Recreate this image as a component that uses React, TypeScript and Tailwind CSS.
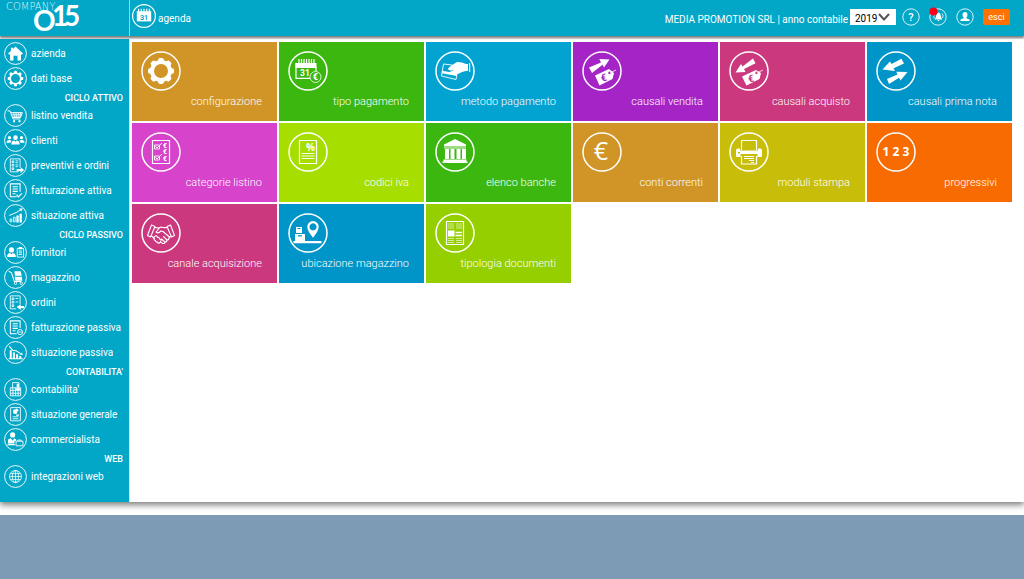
import type { ReactNode } from "react";

const gearTeeth = [0, 45, 90, 135, 180, 225, 270, 315];

const glyphs: Record<string, ReactNode> = {
    gear: (
        <>
            <circle cx="20" cy="20" r="9" fill="none" stroke="currentColor" strokeWidth="4" />
            {gearTeeth.map((a) => (
                <rect key={a} x="17.2" y="7" width="5.6" height="5" rx="1.8" fill="currentColor" transform={`rotate(${a} 20 20)`} />
            ))}
        </>
    ),
    gearThin: (
        <>
            <circle cx="20" cy="20" r="9.3" fill="none" stroke="currentColor" strokeWidth="3" />
            {gearTeeth.map((a) => (
                <rect key={a} x="17.4" y="6.5" width="5.2" height="4.5" rx="1.5" fill="currentColor" transform={`rotate(${a} 20 20)`} />
            ))}
        </>
    ),
    home: <path fill="currentColor" d="M20 8 L33 20 L31 22 L29.500 21 V32 H23.500 V24 H16.500 V32 H10.500 V21 L9 22 L7 20 L12 15.500 V10 H15.500 V12.200 Z" />,
    calendar: (
        <>
            <path fill="currentColor" d="M8 12 h24 v17 h-24z" />
            <path stroke="currentColor" strokeWidth="2" d="M11 8v5M15.500 8v5M20 8v5M24.500 8v5M29 8v5" />
            <text x="20" y="27" textAnchor="middle" fontSize="12" fontWeight="700" fill="#02a7c8">31</text>
        </>
    ),
    calendarEuro: (
        <>
            <path fill="currentColor" d="M7.500 12 h21 v5 h-21z" />
            <path fill="none" stroke="currentColor" strokeWidth="1.200" d="M8 12V27.400H22M28 16V20" />
            <path stroke="currentColor" strokeWidth="1.200" d="M11 8v4M13.500 8v4M16 8v4M18.500 8v4M21 8v4M23.500 8v4M26 8v4" />
            <text x="17" y="24.500" textAnchor="middle" fontSize="8.500" fontWeight="700" fill="currentColor">31</text>
            <circle cx="27.500" cy="26" r="5.500" fill="none" stroke="currentColor" strokeWidth="0.800" />
            <text x="27.300" y="29.200" textAnchor="middle" fontSize="9" fontWeight="900" fill="currentColor">€</text>
        </>
    ),
    cart: (
        <>
            <path fill="none" stroke="currentColor" strokeWidth="1.700" d="M6 12h4.500l5 14h13M12 15h20l-3.500 8.500H15" />
            <path fill="none" stroke="currentColor" strokeWidth="1.300" d="M13 18h18M14 21h16M17 15l1.500 9M21 15l.5 9M25 15l-.5 9M29 15l-1.500 9" />
            <circle cx="17.500" cy="30" r="2" fill="currentColor" />
            <circle cx="27" cy="30" r="2" fill="currentColor" />
        </>
    ),
    people: (
        <g fill="currentColor">
            <circle cx="20" cy="15" r="4" />
            <path d="M13 27v-3q0-3 5-4l2 2 2-2q5 1 5 4v3z" />
            <circle cx="9.500" cy="15" r="2.800" />
            <path d="M4.500 24v-2q0-2.500 5-3 3 .3 3.500 1.500-1.500 1-1.500 3.500z" />
            <circle cx="30.500" cy="15" r="2.800" />
            <path d="M35.500 24v-2q0-2.500-5-3-3 .3-3.500 1.500 1.500 1 1.500 3.500z" />
        </g>
    ),
    orderOut: (
        <>
            <path fill="none" stroke="currentColor" strokeWidth="1.500" d="M28 24V8.500H11V31h14M14 12h3v3h-3zM14 18h3v3h-3zM14 24h3v3h-3zM20 12h5M20 15h4M20 19h5M20 22h4" />
            <path fill="currentColor" d="M22 26h7v-3l6 5-6 5v-3h-7z" />
        </>
    ),
    orderIn: (
        <>
            <path fill="none" stroke="currentColor" strokeWidth="1.500" d="M28 23V8.500H11V31h10M14 12h3v3h-3zM14 18h3v3h-3zM14 24h3v3h-3zM20 13h5M20 19h5" />
            <path fill="currentColor" d="M35 26h-6v-3l-7 5 7 5v-3h6z" />
        </>
    ),
    invoiceCheck: (
        <>
            <path fill="none" stroke="currentColor" strokeWidth="1.800" d="M28 22V8.500H11V31h11M15 13.500h9M15 17.500h9M15 21.500h9M15 25.500h5" />
            <path fill="none" stroke="currentColor" strokeWidth="2.200" d="M22 27l3 4 6-6" />
        </>
    ),
    invoiceMinus: (
        <>
            <path fill="none" stroke="currentColor" strokeWidth="1.800" d="M28 21V8.500H11V31h11M15 13.500h9M15 17.500h9M15 21.500h9M15 25.500h5" />
            <circle cx="28" cy="28" r="4.500" fill="none" stroke="currentColor" strokeWidth="1.500" />
            <path stroke="currentColor" strokeWidth="1.500" d="M25 28h6" />
        </>
    ),
    chartUp: (
        <>
            <path fill="none" stroke="currentColor" strokeWidth="1.500" d="M10.500 31v-5h3v5zM16.500 31v-8h3v8z" />
            <path fill="currentColor" d="M21.500 20h4v12h-4zM27 17h4v15h-4zM26 8h7l-3 5z" />
            <path fill="none" stroke="currentColor" strokeWidth="1.700" d="M9 20l7-3 5-2 8-5" />
        </>
    ),
    chartDown: (
        <>
            <path fill="currentColor" d="M10 16h3.500v15h-3.500zM15.500 20h3.500v11h-3.500zM21 23h3.500v8h-3.500zM26.500 26h3.500v5h-3.500zM33 24h-6l4-4z" />
            <path fill="none" stroke="currentColor" strokeWidth="1.800" d="M9 9l6 7 6 1 8 5M8 31h25" />
        </>
    ),
    supplier: (
        <>
            <circle cx="13" cy="15.500" r="4.500" fill="currentColor" />
            <path fill="currentColor" d="M5.500 28v-3q1-4 5-4l2.500 2 2.500-2q4 .5 5 4v3z" />
            <path fill="none" stroke="currentColor" strokeWidth="1.500" d="M23 13h11v15H23zM25.500 17.500h6M25.500 20.500h6M25.500 23.500h6" />
            <path fill="currentColor" d="M25.500 10.500h6v4h-6z" />
        </>
    ),
    trolley: (
        <>
            <path fill="none" stroke="currentColor" strokeWidth="1.800" d="M8 9l5 3 5 15h12" />
            <path fill="currentColor" d="M18 9h11l2 8H19zM18.500 18.500h12.500l1 7H20z" />
            <circle cx="20" cy="30" r="2.200" fill="none" stroke="currentColor" strokeWidth="1.500" />
            <circle cx="30" cy="30" r="2.200" fill="none" stroke="currentColor" strokeWidth="1.500" />
        </>
    ),
    calculator: (
        <>
            <path fill="none" stroke="currentColor" strokeWidth="1.500" d="M11 17h18v14H11zM11 21.500h18M11 26.500h18M15.500 17v14M20 17v14M24.500 17v14M15 17v-9h11v9" />
            <path fill="currentColor" d="M22 10h4v6h-4zM21 18h7v3h-7z" />
        </>
    ),
    report: (
        <>
            <path fill="none" stroke="currentColor" strokeWidth="1.500" d="M11.500 8h17v23h-17zM15 24h10M15 27.500h10" />
            <circle cx="19.500" cy="15" r="4" fill="currentColor" />
            <path fill="currentColor" d="M21 9.500q4 .5 4.500 4.500H21zM21 20h5v2h-5z" />
        </>
    ),
    accountant: (
        <>
            <circle cx="15" cy="12" r="4.500" fill="currentColor" />
            <path fill="currentColor" d="M7 27v-7l5-2 3 4 3-4 3 2v3h-3v4zM6 28h13v2H6z" />
            <path fill="none" stroke="currentColor" strokeWidth="1.500" d="M21 23h12v8H21zM24 23v-2h6v2" />
        </>
    ),
    globe: (
        <g fill="none" stroke="currentColor" strokeWidth="1.300">
            <circle cx="20" cy="20" r="10.500" />
            <ellipse cx="20" cy="20" rx="5.500" ry="10.500" />
            <path d="M20 9.500v21M9.500 20h21M11 15h18M11 25h18" />
        </g>
    ),
    card: (
        <>
            <path fill="currentColor" d="M17 14l5-3 5 .5 4 1.500h2v7h-2l-4 1-4 2-4-.5-4 .2q-2-1 0-2l4-1.500-4 .3q-2-.5-2-2z" />
            <path fill="currentColor" d="M34 12h1.200v9H34z" />
            <path fill="none" stroke="currentColor" strokeWidth="0.900" d="M17 14l-8.500-1L6.500 25l14.500 3.500 1-5" />
            <path stroke="currentColor" strokeWidth="2.600" d="M7 21l15 2.800" />
        </>
    ),
    sale: (
        <>
            <path fill="currentColor" d="M7 16.500l12-5-1.700-3.500L27.500 8.500l-5.500 8-1.500-2.800L10 22z" />
            <path fill="currentColor" fillRule="evenodd" d="M13 24.500L27 18l5 4-1.500 6-13 6.500zM27.500 20.500a1.300 1.300 0 1 0 .1 0z" />
            <path fill="none" stroke="currentColor" strokeWidth="0.800" d="M28 22l6-3" />
            <text x="21.500" y="30" textAnchor="middle" fontSize="10" fontWeight="700" fill="#a524c5" transform="rotate(-14 22 26)">€</text>
        </>
    ),
    purchase: (
        <>
            <path fill="currentColor" d="M6.500 21.500l5.500-8.500 1.500 2.500L24 7.500l2.500 4.800-11.500 5.700 1.500 3z" />
            <path fill="currentColor" fillRule="evenodd" d="M13 25.500L27 19l5 3-1.500 6-13 6.500zM27.500 20.500a1.300 1.300 0 1 0 .1 0z" />
            <path fill="none" stroke="currentColor" strokeWidth="0.800" d="M28 22l6-3" />
            <text x="21.500" y="31" textAnchor="middle" fontSize="10" fontWeight="700" fill="#cb387e" transform="rotate(-14 22 26)">€</text>
        </>
    ),
    transfer: (
        <>
            <path fill="currentColor" d="M6.500 18.500l7.500-8 1.500 2.500L25.500 7.800l2.500 4.700-10.500 4.700 1.500 2.800z" />
            <path fill="currentColor" d="M11 28l10.500-4.500-1.200-2.700 11.200.2-7 8.500-1.500-2.800L13 33z" />
        </>
    ),
    checklist: (
        <>
            <path fill="none" stroke="currentColor" strokeWidth="1.200" d="M11.500 8.500h17v23h-17z" />
            <path fill="none" stroke="currentColor" strokeWidth="0.900" d="M13.500 13h5v4h-5zM13.500 24h5v4h-5zM14.500 14l1.500 2 5-5M14.500 25l1.500 2 5-5" />
            <g fontSize="6.500" fontWeight="900" fill="currentColor">
                <text x="22" y="15.500">€</text>
                <text x="22" y="22">€</text>
                <text x="22" y="29">€</text>
            </g>
        </>
    ),
    percent: (
        <>
            <path fill="none" stroke="currentColor" strokeWidth="1.200" d="M11.500 8.500h17v23h-17z" />
            <path stroke="currentColor" strokeWidth="0.900" d="M13.500 21.500h13M13.500 24h13M13.500 26.500h13" />
            <text x="22.500" y="19" textAnchor="middle" fontSize="10" fontWeight="700" fontFamily="Open Sans, sans-serif" fill="currentColor">%</text>
        </>
    ),
    bank: (
        <path fill="currentColor" d="M20 7l11 5.500v2H9v-2zM9 15.500h22v1H9zM10 17h4v10h-4zM15.500 17h4v10h-4zM21.500 17h4v10h-4zM27 17h4v10h-4zM8.500 27.500h23v2h-23zM7.500 29.500h25v1.500h-25z" />
    ),
    euro: <text x="19" y="28" textAnchor="middle" fontSize="25" fontWeight="500" fontFamily="Open Sans, sans-serif" fill="currentColor">€</text>,
    printer: (
        <>
            <path fill="none" stroke="currentColor" strokeWidth="1.200" d="M12.500 18V8.500h15V18M12.500 24v8h15v-8" />
            <path fill="currentColor" fillRule="evenodd" d="M9 16.500h2v2h18v-2h2q2 0 2 2V24q0 1-1 1h-3.500v-3h-17v3H8q-1 0-1-1v-5.500q0-2 2-2zM9 20v1.500h2V20z" />
            <path stroke="currentColor" strokeWidth="1" d="M15 24.500h10M15 26.500h10M20 28.500h5M22 30.500h3" />
        </>
    ),
    numbers: <text x="20" y="24" textAnchor="middle" fontSize="12" fontWeight="700" fontFamily="Open Sans, sans-serif" fill="currentColor">1 2 3</text>,
    handshake: (
        <g fill="none" stroke="currentColor" strokeWidth="1.100" strokeLinejoin="round" strokeLinecap="round">
            <path d="M10.500 12l3.500 1.500-4.500 10.500-3-1.500zM29.500 12L26 13.500l4.500 10.500 3-1.500z" />
            <path d="M14 14.500q3 1 6-.5 3 1 6 .5M18.500 15l-3.500 4q2 2 5-1l2 .5 7 6M10.500 23l3 2.500M29.500 23l-1.500 2" />
            <path d="M13 26q-1-2 1.500-3 2-.5 2 1.500 2-.5 2 1.500 2 0 1.500 2l-1.500 2q-1.500.500-2-1-2 .3-2-1.500-1.500 0-1.500-1.500zM20 29.500l2 1q2 .3 2-1.500 2 0 2-2 2 0 2-2M20.500 26l3.500 3M22.500 23.500l3.500 3.500" />
        </g>
    ),
    location: (
        <>
            <path fill="currentColor" fillRule="evenodd" d="M25 8a5.700 5.700 0 0 1 5.700 5.700q0 4-5.700 11-5.700-7-5.700-11A5.700 5.700 0 0 1 25 8zM25 10.300a3.600 3.600 0 1 0 .1 0z" />
            <path fill="currentColor" fillRule="evenodd" d="M8 14h6v6H8zM9.500 15v1h3v-1zM7 21h10v7H7zM10 22.200v1.400h4v-1.400zM5.500 28h28v2.200h-28z" />
        </>
    ),
    document: (
        <>
            <path fill="none" stroke="currentColor" strokeWidth="1.200" d="M11.500 8.500h17v23h-17z" />
            <path fill="currentColor" d="M13 17.500h6.500v6H13z" />
            <path stroke="currentColor" strokeWidth="1.300" d="M20.500 19.500h6.500M20.500 22.500h6.500" />
            <path stroke="currentColor" strokeWidth="0.600" d="M13 11h6M13 13h6M13 15h6M21 11h6M21 13h6M21 15h6M13 25.500h6M13 27.500h6M13 29.500h6M21 25.500h6M21 27.500h6M21 29.500h6" />
        </>
    ),
};

function RoundIcon({ name, className, ring }: { name: string; className: string; ring: number }) {
    return (
        <svg viewBox="0 0 40 40" className={`shrink-0 ${className}`} aria-hidden="true">
            <circle cx="20" cy="20" r="19" fill="none" stroke="currentColor" strokeWidth={ring} />
            {glyphs[name]}
        </svg>
    );
}

const menu = [
    {
        title: "",
        items: [
            { label: "azienda", icon: "home" },
            { label: "dati base", icon: "gearThin" },
        ],
    },
    {
        title: "CICLO ATTIVO",
        items: [
            { label: "listino vendita", icon: "cart" },
            { label: "clienti", icon: "people" },
            { label: "preventivi e ordini", icon: "orderOut" },
            { label: "fatturazione attiva", icon: "invoiceCheck" },
            { label: "situazione attiva", icon: "chartUp" },
        ],
    },
    {
        title: "CICLO PASSIVO",
        items: [
            { label: "fornitori", icon: "supplier" },
            { label: "magazzino", icon: "trolley" },
            { label: "ordini", icon: "orderIn" },
            { label: "fatturazione passiva", icon: "invoiceMinus" },
            { label: "situazione passiva", icon: "chartDown" },
        ],
    },
    {
        title: "CONTABILITA'",
        items: [
            { label: "contabilita'", icon: "calculator" },
            { label: "situazione generale", icon: "report" },
            { label: "commercialista", icon: "accountant" },
        ],
    },
    { title: "WEB", items: [{ label: "integrazioni web", icon: "globe" }] },
];

const tiles = [
    { label: "configurazione", icon: "gear", color: "bg-[#d09526]" },
    { label: "tipo pagamento", icon: "calendarEuro", color: "bg-[#3cb70f]" },
    { label: "metodo pagamento", icon: "card", color: "bg-[#02a3d1]" },
    { label: "causali vendita", icon: "sale", color: "bg-[#a524c5]" },
    { label: "causali acquisto", icon: "purchase", color: "bg-[#cb387e]" },
    { label: "causali prima nota", icon: "transfer", color: "bg-[#0095c8]" },
    { label: "categorie listino", icon: "checklist", color: "bg-[#d743cb]" },
    { label: "codici iva", icon: "percent", color: "bg-[#a6de00]" },
    { label: "elenco banche", icon: "bank", color: "bg-[#3cb70f]" },
    { label: "conti correnti", icon: "euro", color: "bg-[#d09526]" },
    { label: "moduli stampa", icon: "printer", color: "bg-[#c8bd08]" },
    { label: "progressivi", icon: "numbers", color: "bg-[#f86b00]" },
    { label: "canale acquisizione", icon: "handshake", color: "bg-[#cb387e]" },
    { label: "ubicazione magazzino", icon: "location", color: "bg-[#0095c8]" },
    { label: "tipologia documenti", icon: "document", color: "bg-[#96cf00]" },
];

function Logo() {
    return (
        <svg viewBox="0 0 129 36" className="w-[129px] h-9 overflow-visible" role="img" aria-label="Company 015">
            <text x="6" y="10" fontSize="10" fontWeight="200" fontFamily="DejaVu Sans, sans-serif" fill="#d5f3f8">COMPANY</text>
            <text x="33" y="31" fontSize="28" fontWeight="700" fontFamily="Lato, sans-serif" fill="#fff">
                O<tspan x="52" y="26">1</tspan><tspan x="64" y="26">5</tspan>
            </text>
        </svg>
    );
}

function Header() {
    return (
        <header className="relative z-10 flex h-9 bg-[#02a7c8] text-white shadow-[0_2px_2px_rgba(0,0,0,0.5)]">
            <a href="#" className="w-[130px] shrink-0 border-r border-[#8fdbe9]">
                <Logo />
            </a>
            <a href="#" className="flex items-center gap-0.5 pl-0.5 pb-1 text-[10px]">
                <RoundIcon name="calendar" className="size-6" ring={2} />
                <span className="pt-1">agenda</span>
            </a>
            <div className="ml-auto flex items-center pr-3.5 pb-0.5 text-[10px]">
                <label htmlFor="anno" className="pt-1">MEDIA PROMOTION SRL | anno contabile</label>
                <div className="relative ml-0.5">
                    <select id="anno" className="block h-4 w-[46px] appearance-none bg-white pt-0.5 pl-[5px] text-[10px] leading-4 text-black">
                        <option>2019</option>
                    </select>
                    <svg viewBox="0 0 12 8" className="pointer-events-none absolute right-1.5 top-1 h-2 w-3" aria-hidden="true">
                        <path d="M1 1l5 5.500 5-5.500" fill="none" stroke="#555" strokeWidth="2" />
                    </svg>
                </div>
                <div className="flex items-center gap-[9px] pl-[6px]">
                    <button type="button" aria-label="aiuto">
                        <svg viewBox="0 0 18 18" className="size-[18px]">
                            <circle cx="9" cy="9" r="8.200" fill="none" stroke="#d5f3f8" />
                            <text x="9" y="12.800" textAnchor="middle" fontSize="11" fontWeight="500" fill="#fff">?</text>
                        </svg>
                    </button>
                    <button type="button" aria-label="notifiche">
                        <svg viewBox="0 0 18 18" className="size-[18px] overflow-visible">
                            <circle cx="9" cy="9" r="8.200" fill="none" stroke="#d5f3f8" />
                            <path d="M9.500 4.500q2.200.500 2.500 4.500l1.300 2.500h-7.600L7 9q.3-4 2.500-4.500zM8.300 12h2.400L9.500 13.500z" fill="#fff" />
                            <path d="M13.200 5.500q1.500 2 .3 4.500" stroke="#fff" strokeWidth="0.800" fill="none" />
                            <path d="M5.500 6.500q-1.200 2-.2 4" stroke="#fff" strokeWidth="0.800" fill="none" />
                            <circle cx="4.500" cy="3.500" r="4" fill="#ff0015" />
                        </svg>
                    </button>
                    <button type="button" aria-label="profilo">
                        <svg viewBox="0 0 18 18" className="size-[18px]">
                            <circle cx="9" cy="9" r="8.200" fill="none" stroke="#d5f3f8" />
                            <path d="M9 4q2.500 0 2.500 3 0 1.500-1.200 2.500v.8l3.200 1.200V13h-9v-1.500l3.200-1.200v-.8Q6.500 8.500 6.500 7q0-3 2.500-3z" fill="#fff" />
                        </svg>
                    </button>
                    <button type="button" className="h-4 w-[27px] rounded-xs bg-[#ff7200] text-[9px] leading-4">esci</button>
                </div>
            </div>
        </header>
    );
}

function Sidebar() {
    return (
        <nav className="w-[130px] shrink-0 border-r border-[#c9edf4] bg-[#02a7c8] pt-0.5 pb-[13px] text-[10px] text-white">
            {menu.map((group) => (
                <div key={group.title}>
                    {group.title && (
                        <h2 className="h-3 pr-1.5 text-right text-[9px] font-medium leading-[14px]">{group.title}</h2>
                    )}
                    {group.items.map((item) => (
                        <a key={item.label} href="#" className="flex h-[25px] items-center gap-1 whitespace-nowrap pl-1">
                            <RoundIcon name={item.icon} className="size-[23px]" ring={1.6} />
                            <span className="leading-4">{item.label}</span>
                        </a>
                    ))}
                </div>
            ))}
        </nav>
    );
}

export default function App() {
    return (
        <div className="min-h-screen bg-[#7e9bb5] font-[Roboto,sans-serif]">
            <div className="bg-white pb-[13px]">
                <Header />
                <div className="mt-[3px] flex bg-white shadow-[0_3px_6px_rgba(0,0,0,0.5)]">
                    <Sidebar />
                    <main className="grid flex-1 grid-cols-6 content-start gap-0.5 pt-[3px] pr-3 pl-0.5">
                        {tiles.map((tile) => (
                            <a key={tile.label} href="#" className={`flex h-[79px] flex-col justify-between pt-[9px] pr-[15px] pb-[11px] pl-[9px] text-white ${tile.color}`}>
                                <RoundIcon name={tile.icon} className="size-10" ring={1.5} />
                                <span className="text-right text-[11px] leading-4 font-light whitespace-nowrap">{tile.label}</span>
                            </a>
                        ))}
                    </main>
                </div>
            </div>
        </div>
    );
}
